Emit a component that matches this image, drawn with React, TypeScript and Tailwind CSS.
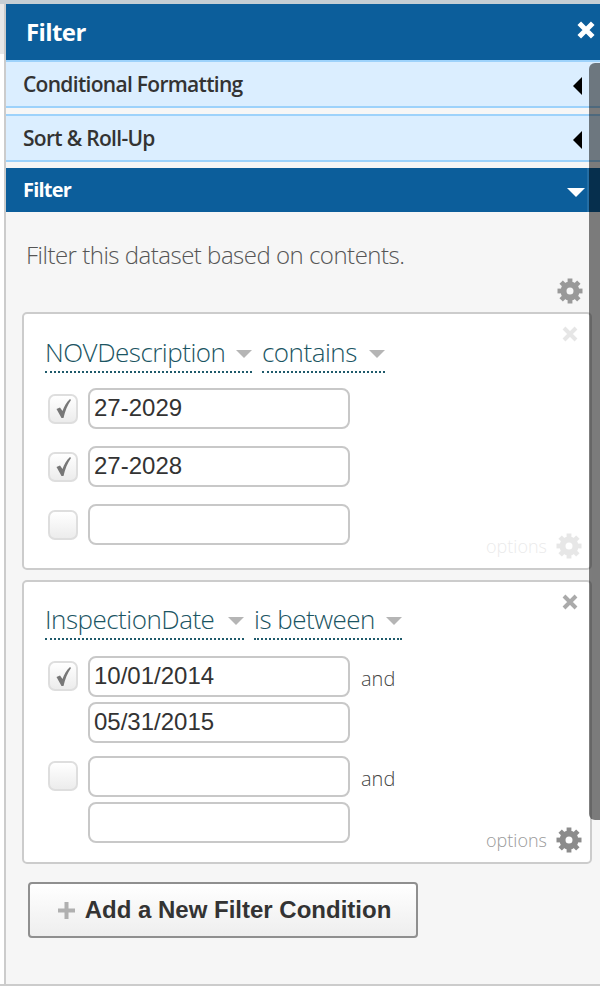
const inputClass =
  "h-[41px] w-[262px] rounded-[8px] border-2 border-[#c8c8c8] bg-white px-[4px] pb-[2px] text-[24px] leading-none text-[#333] font-['Liberation_Sans',sans-serif] flex items-center";

const Check = ({ checked }: { checked?: boolean }) => (
  <div className="mr-[10px] flex h-[30px] w-[30px] shrink-0 items-center justify-center rounded-[7px] border-2 border-[#dedede] bg-gradient-to-b from-[#ffffff] to-[#ececec]">
    {checked && (
      <svg viewBox="0 0 15 19" className="h-[19px] w-[15px]">
        <path d="M0.5 10 L4 8.5 L6.5 12 C8 7.5 10.5 3 14 0 L15 1 C11.5 6 9 12 7.5 19 L5.5 19 Z" fill="#777777" />
      </svg>
    )}
  </div>
);

const Field = ({ value }: { value?: string }) => <div className={inputClass}>{value}</div>;

const Gear = ({ className }: { className: string }) => (
  <svg viewBox="0 0 26 26" className={className}>
    <circle cx="13" cy="13" r="6.5" fill="none" stroke="currentColor" strokeWidth="6" />
    {[0, 45, 90, 135, 180, 225, 270, 315].map((angle) => (
      <rect key={angle} x="10.6" y="0.5" width="4.8" height="6" fill="currentColor" transform={`rotate(${angle} 13 13)`} />
    ))}
  </svg>
);

const Cross = ({ className, weight = 4 }: { className: string; weight?: number }) => (
  <svg viewBox="0 0 16 16" className={className}>
    <path d="M2 2 L14 14 M14 2 L2 14" stroke="currentColor" strokeWidth={weight} fill="none" />
  </svg>
);

const Picker = ({ label, width, gap }: { label: string; width: string; gap: string }) => (
  <div className={`flex h-[40px] items-center justify-between border-b-2 border-dotted border-[#1f5a6b] pb-[1px] ${width} ${gap}`}>
    <span className="text-[26px] font-light leading-none tracking-[-0.5px] text-[#1b5563]">{label}</span>
    <span className="mt-[4px] h-0 w-0 border-x-[8px] border-t-[8px] border-x-transparent border-t-[#b5b5b5]" />
  </div>
);

const Options = ({ faded }: { faded?: boolean }) => (
  <div className={`absolute bottom-[9px] right-[8px] flex items-center gap-[9px] ${faded ? 'opacity-20' : ''}`}>
    <span className="text-[18px] font-light leading-none text-[#9a9a9a]">options</span>
    <Gear className="h-[26px] w-[26px] text-[#8c8c8c]" />
  </div>
);

const AccordionRow = ({ label }: { label: string }) => (
  <div className="flex h-[48px] items-center justify-between border-y-2 border-[#9dd2fb] bg-[#dbeeff] pl-[17px] pr-[18px]">
    <span className="text-[21px] font-semibold leading-none tracking-[-0.7px] text-[#333]">{label}</span>
    <span className="mt-[3px] h-0 w-0 border-y-[9px] border-r-[9px] border-y-transparent border-r-black" />
  </div>
);

export default function App() {
  return (
    <div className="relative h-[986px] w-[600px] overflow-hidden bg-white font-['Open_Sans',sans-serif]">
      <div className="h-[4px] bg-[#c6ced4]" />
      <div className="flex h-[980px]">
        <div className="flex w-[4px] flex-col">
          <div className="h-[50px] bg-[#e8e8e8]" />
        </div>
        <div className="w-[2px] bg-[#cccccc]" />
        <div className="flex-1 bg-[#f6f6f6]">
          <div className="flex h-[56px] items-center justify-between bg-[#0c5e9b] pl-[20px] pr-[5px]">
            <span className="text-[24px] font-bold leading-none tracking-[-0.6px] text-white">Filter</span>
            <Cross className="mb-[5px] h-[18px] w-[18px] text-white" weight={4.5} />
          </div>
          <AccordionRow label="Conditional Formatting" />
          <div className="h-[6px]" />
          <AccordionRow label="Sort & Roll-Up" />
          <div className="h-[6px]" />
          <div className="flex h-[44px] items-center justify-between bg-[#0c5e9b] pl-[17px] pr-[15px]">
            <span className="text-[20px] font-bold leading-none tracking-[-0.8px] text-white">Filter</span>
            <span className="mt-[4px] h-0 w-0 border-x-[9px] border-t-[9px] border-x-transparent border-t-white" />
          </div>

          <p className="mt-[28px] pl-[20px] text-[24px] font-light leading-[30px] tracking-[-0.5px] text-[#555]">
            Filter this dataset based on contents.
          </p>
          <div className="mt-[8px] flex justify-end pr-[17px]">
            <Gear className="h-[26px] w-[26px] text-[#999]" />
          </div>

          <div className="relative ml-[16px] mt-[8px] h-[258px] w-[570px] rounded-[5px] border-2 border-[#cccccc] bg-white pl-[21px] pt-[19px]">
            <Cross className="absolute right-[12px] top-[12px] h-[16px] w-[16px] text-[#e6e6e6]" />
            <div className="flex">
              <Picker label="NOVDescription" width="w-[207px]" gap="mr-[10px]" />
              <Picker label="contains" width="w-[123px]" gap="" />
            </div>
            <div className="mt-[15px] flex flex-col gap-[17px] pl-[3px]">
              <div className="flex items-center">
                <Check checked />
                <Field value="27-2029" />
              </div>
              <div className="flex items-center">
                <Check checked />
                <Field value="27-2028" />
              </div>
              <div className="flex items-center">
                <Check />
                <Field />
              </div>
            </div>
            <Options faded />
          </div>

          <div className="relative ml-[16px] mt-[10px] h-[284px] w-[570px] rounded-[5px] border-2 border-[#cccccc] bg-white pl-[21px] pt-[18px]">
            <Cross className="absolute right-[12px] top-[12px] h-[16px] w-[16px] text-[#aaaaaa]" />
            <div className="flex">
              <Picker label="InspectionDate" width="w-[199px]" gap="mr-[10px]" />
              <Picker label="is between" width="w-[148px]" gap="" />
            </div>
            <div className="mt-[16px] flex flex-col gap-[13px] pl-[3px]">
              <div className="flex items-start">
                <div className="mt-[5px]"><Check checked /></div>
                <div className="flex flex-col gap-[5px]">
                  <Field value="10/01/2014" />
                  <Field value="05/31/2015" />
                </div>
                <span className="ml-[11px] mt-[9px] text-[20px] font-light leading-[28px] text-[#444]">and</span>
              </div>
              <div className="flex items-start">
                <div className="mt-[5px]"><Check /></div>
                <div className="flex flex-col gap-[5px]">
                  <Field />
                  <Field />
                </div>
                <span className="ml-[11px] mt-[9px] text-[20px] font-light leading-[28px] text-[#444]">and</span>
              </div>
            </div>
            <Options />
          </div>

          <div className="ml-[22px] mt-[18px] flex h-[56px] w-[390px] items-center justify-center gap-[10px] rounded-[4px] border-2 border-[#8f8f8f] bg-gradient-to-b from-[#ffffff] to-[#eeeeee] pl-[3px] font-['Liberation_Sans',sans-serif]">
            <svg viewBox="0 0 17 17" className="h-[17px] w-[17px] text-[#b0b0b0]">
              <path d="M8.5 0 V17 M0 8.5 H17" stroke="currentColor" strokeWidth="4" fill="none" />
            </svg>
            <span className="text-[24px] font-bold leading-none text-[#333]">Add a New Filter Condition</span>
          </div>
        </div>
      </div>
      <div className="h-[2px] bg-[#cccccc]" />
      <div className="absolute left-[587px] top-[168px] h-[44px] w-[2px] bg-white/10" />
      <div className="absolute left-[589px] top-[63px] h-[757px] w-[11px] rounded-l-[6px] bg-black/50" />
    </div>
  );
}
